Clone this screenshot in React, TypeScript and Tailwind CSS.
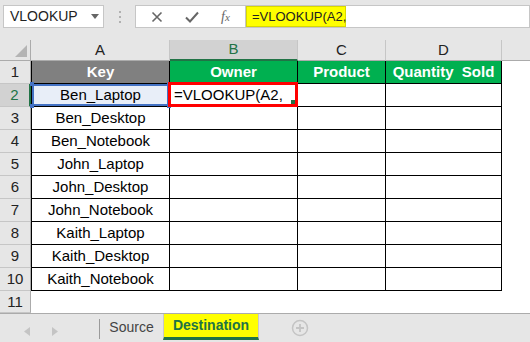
import React from 'react';

const keys = [
  'Ben_Laptop',
  'Ben_Desktop',
  'Ben_Notebook',
  'John_Laptop',
  'John_Desktop',
  'John_Notebook',
  'Kaith_Laptop',
  'Kaith_Desktop',
  'Kaith_Notebook',
];

const font = { fontFamily: '"Liberation Sans", Arial, sans-serif' };

const RowHead: React.FC<{ n: number; active?: boolean }> = ({ n, active }) => (
  <div
    className={`flex items-center justify-center text-[15px] pt-[1px] ${
      active
        ? 'bg-[#d2d2d2] text-[#217346] border-r-2 border-r-[#217346]'
        : 'bg-[#e6e6e6] text-[#222] border-r border-r-[#ababab]'
    } border-b border-b-[#c6c6c6]`}
  >
    {n}
  </div>
);

const App: React.FC = () => {
  return (
    <div className="w-[530px] h-[342px] overflow-hidden bg-white flex flex-col select-none" style={font}>
      {/* Formula bar */}
      <div className="h-[40px] bg-[#e6e6e6] flex items-start pt-[5px] pl-[3px] shrink-0">
        <div className="w-[101px] h-[23px] bg-white border border-[#c6c6c6] flex items-center pl-[6px] pr-[4px] text-[14px] text-[#222]">
          <span className="flex-1">VLOOKUP</span>
          <svg width="8" height="5" viewBox="0 0 8 5">
            <path d="M0 0h8L4 5z" fill="#666" />
          </svg>
        </div>
        <div className="w-[31px] h-[23px] flex flex-col items-center justify-center gap-[3px]">
          <span className="w-[2px] h-[2px] bg-[#b0b0b0]" />
          <span className="w-[2px] h-[2px] bg-[#b0b0b0]" />
          <span className="w-[2px] h-[2px] bg-[#b0b0b0]" />
        </div>
        <div className="w-[111px] h-[23px] bg-white border border-[#c6c6c6] flex items-center">
          <div className="w-[42px] flex justify-center">
            <svg width="12" height="12" viewBox="0 0 12 12">
              <path d="M1.5 1.5l9 9M10.5 1.5l-9 9" stroke="#666" strokeWidth="1.6" />
            </svg>
          </div>
          <div className="w-[28px] flex justify-center">
            <svg width="14" height="12" viewBox="0 0 14 12">
              <path d="M1 6.5l4 4L13 1.5" stroke="#666" strokeWidth="2" fill="none" />
            </svg>
          </div>
          <div className="flex-1 flex justify-center">
            <span className="italic text-[14px] text-[#666]" style={{ fontFamily: '"Liberation Serif", serif' }}>
              f<span className="text-[11px]">x</span>
            </span>
          </div>
        </div>
        <div className="flex-1 h-[23px] bg-white border border-[#c6c6c6] border-l-0 flex items-center">
          <div className="h-full w-[100px] bg-[#ffff00] border border-[#d8d800] flex items-center pl-[5px] text-[13px] text-[#222]">
            =VLOOKUP(A2,
          </div>
        </div>
      </div>

      {/* Sheet grid */}
      <div className="grid grid-cols-[31px_139px_128px_88px_116px_1fr] grid-rows-[21px_repeat(10,23px)_22px] shrink-0">
        {/* column headers */}
        <div className="bg-[#e6e6e6] border-r border-r-[#ababab] border-b border-b-[#ababab] flex items-end justify-end p-[3px]">
          <svg width="12" height="12" viewBox="0 0 12 12">
            <path d="M12 0v12H0z" fill="#b4b4b4" />
          </svg>
        </div>
        <div className="bg-[#e6e6e6] border-r border-r-[#c6c6c6] border-b border-b-[#ababab] flex items-center justify-center text-[15px] text-[#222]">A</div>
        <div className="bg-[#d2d2d2] border-r border-r-[#c6c6c6] border-b-2 border-b-[#217346] flex items-center justify-center text-[15px] text-[#217346]">B</div>
        <div className="bg-[#e6e6e6] border-r border-r-[#c6c6c6] border-b border-b-[#ababab] flex items-center justify-center text-[15px] text-[#222]">C</div>
        <div className="bg-[#e6e6e6] border-r border-r-[#c6c6c6] border-b border-b-[#ababab] flex items-center justify-center text-[15px] text-[#222]">D</div>
        <div className="bg-[#e6e6e6] border-b border-b-[#ababab]" />

        {/* row 1 */}
        <RowHead n={1} />
        <div className="bg-[#808080] border-l border-b border-r border-black flex items-center justify-center pt-[1px] text-white font-bold text-[15px]">Key</div>
        <div className="bg-[#00b050] border-b border-r border-black flex items-center justify-center pt-[1px] text-white font-bold text-[15px]">Owner</div>
        <div className="bg-[#00b050] border-b border-r border-black flex items-center justify-center pt-[1px] text-white font-bold text-[15px]">Product</div>
        <div className="bg-[#00b050] border-b border-r border-black flex items-center justify-center pt-[1px] text-white font-bold text-[15px] whitespace-pre">Quantity  Sold</div>
        <div />

        {/* rows 2-10 */}
        {keys.map((k, i) => {
          const row = i + 2;
          const first = row === 2;
          return (
            <React.Fragment key={k}>
              <RowHead n={row} active={first} />
              {first ? (
                <div className="relative border-l border-b border-r border-black">
                  <div className="absolute inset-0 bg-[#e8eef8] border-2 border-[#4472c4] flex items-center justify-center pt-[1px] text-[15px] text-black">
                    {k}
                  </div>
                  <span className="absolute -left-[2px] -top-[2px] w-[4px] h-[4px] bg-[#4472c4]" />
                  <span className="absolute -right-[2px] -top-[2px] w-[4px] h-[4px] bg-[#4472c4]" />
                  <span className="absolute -left-[2px] -bottom-[2px] w-[4px] h-[4px] bg-[#4472c4]" />
                  <span className="absolute -right-[2px] -bottom-[2px] w-[4px] h-[4px] bg-[#4472c4]" />
                </div>
              ) : (
                <div className="border-l border-b border-r border-black flex items-center justify-center pt-[1px] text-[15px] text-black">{k}</div>
              )}
              {first ? (
                <div className="relative border-b border-r border-black">
                  <div className="absolute -left-[2px] -top-[2px] -right-[1px] -bottom-[1px] border-[3px] border-[#ff0000] flex items-center pl-[3px] pt-[1px] text-[15px] text-black z-10">
                    =VLOOKUP(A2,
                    <span className="absolute right-[0px] bottom-[0px] w-[4px] h-[4px] bg-[#217346]" />
                  </div>
                </div>
              ) : (
                <div className="border-b border-r border-black" />
              )}
              <div className="border-b border-r border-black" />
              <div className="border-b border-r border-black" />
              <div />
            </React.Fragment>
          );
        })}

        {/* row 11 */}
        <RowHead n={11} />
        <div />
        <div />
        <div />
        <div />
        <div />
      </div>

      {/* Sheet tabs */}
      <div className="flex-1 bg-[#e6e6e6] border-t border-t-[#ababab] flex items-start">
        <div className="w-[99px] h-[24px] flex items-center pl-[24px] gap-[22px] mt-[5px]">
          <svg width="6" height="9" viewBox="0 0 6 9">
            <path d="M6 0v9L0 4.5z" fill="#c4c4c4" />
          </svg>
          <svg width="6" height="9" viewBox="0 0 6 9">
            <path d="M0 0v9l6-4.5z" fill="#c4c4c4" />
          </svg>
        </div>
        <div className="w-px h-[20px] bg-[#9a9a9a] mt-[5px]" />
        <div className="w-[63px] h-[26px] flex items-center justify-center text-[14px] text-[#444]">Source</div>
        <div className="w-[96px] h-[26px] bg-[#ffff00] border-l border-r border-[#c8c8c8] border-b-[3px] border-b-[#217346] flex items-center justify-center text-[14px] font-bold text-[#217346]">
          Destination
        </div>
        <div className="ml-[32px] mt-[5px]">
          <svg width="18" height="18" viewBox="0 0 18 18">
            <circle cx="9" cy="9" r="7.5" fill="none" stroke="#c4c4c4" strokeWidth="1.5" />
            <path d="M9 5v8M5 9h8" stroke="#c4c4c4" strokeWidth="1.8" />
          </svg>
        </div>
      </div>
    </div>
  );
};

export default App;
